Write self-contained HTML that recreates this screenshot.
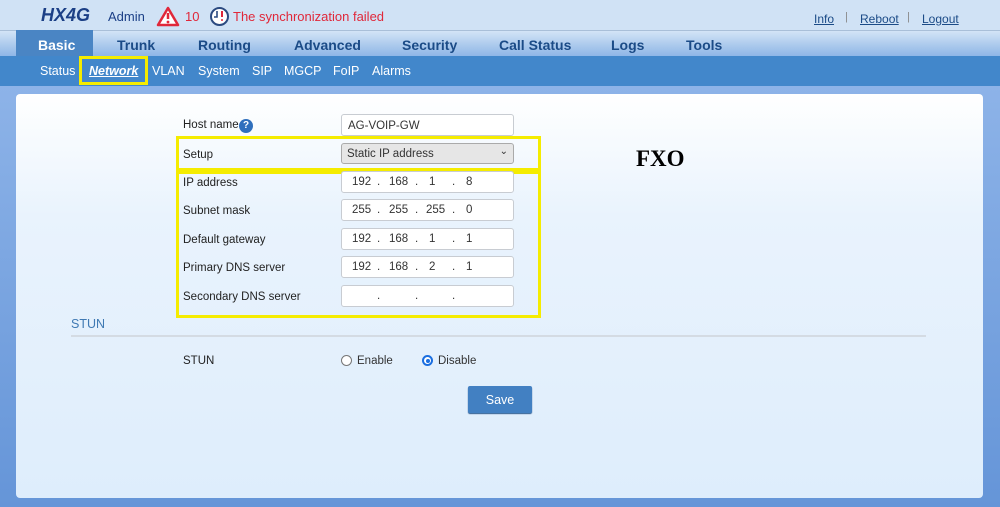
<!DOCTYPE html>
<html><head><meta charset="utf-8"><style>
*{margin:0;padding:0;box-sizing:border-box}
body{width:1000px;height:507px;overflow:hidden;font-family:"Liberation Sans","DejaVu Sans",sans-serif;background:#6e9ad9;position:relative}
.a{position:absolute}
#hdr{left:0;top:0;width:1000px;height:31px;background:#d0e2f5;border-bottom:1px solid #a9bfd8}
#tabs{left:0;top:31px;width:1000px;height:25px;background:linear-gradient(#d3e4f6,#a9c8ec 60%,#8fb6e7)}
#sub{left:0;top:56px;width:1000px;height:30px;background:#4287cb}
#bg{left:0;top:86px;width:1000px;height:421px;background:linear-gradient(#8db3e8,#6595d8)}
#panel{left:16px;top:94px;width:967px;height:404px;background:linear-gradient(#fff,#e9f3fd 30%,#deedfc);border-radius:4px}
.tab{top:37px;font-size:14px;font-weight:bold;color:#1b4b87}
.sn{top:64px;font-size:12.5px;color:#fff}
.lbl{font-size:11.5px;color:#222}
.inp{left:341px;width:173px;height:22px;background:#fff;border:1px solid #c8ccd2;border-radius:3px;font-size:11.5px;color:#333}
.ip span{position:absolute;top:4px}
.yb{border:3px solid #f5ec00}
.lk{top:12px;font-size:12px;color:#1b4b87;text-decoration:underline}
</style></head><body>
<div class="a" id="hdr"></div>
<div class="a" style="left:41px;top:5px;font-size:18px;font-weight:bold;font-style:italic;color:#1b3f86">HX4G</div>
<div class="a" style="left:108px;top:9px;font-size:13px;color:#1b3f86">Admin</div>
<svg class="a" style="left:156px;top:6px" width="24" height="21" viewBox="0 0 24 21"><path d="M12 2L22 19H2Z" fill="#fff" stroke="#e0283a" stroke-width="2.5" stroke-linejoin="round"/><path d="M12 7v6" stroke="#e0283a" stroke-width="2.5"/><circle cx="12" cy="16" r="1.4" fill="#e0283a"/></svg>
<div class="a" style="left:185px;top:9px;font-size:13px;color:#e0283a">10</div>
<svg class="a" style="left:209px;top:6px" width="21" height="21" viewBox="0 0 21 21"><circle cx="10.5" cy="10.5" r="8.5" fill="#fff" stroke="#2b4a80" stroke-width="2"/><path d="M8 5v6h-3" stroke="#2b4a80" stroke-width="1.6" fill="none"/><path d="M13 5v6" stroke="#e0283a" stroke-width="2"/><circle cx="13" cy="14" r="1" fill="#e0283a"/></svg>
<div class="a" style="left:233px;top:9px;font-size:13px;color:#e0283a">The synchronization failed</div>
<div class="a lk" style="left:814px">Info</div>
<div class="a" style="left:845px;top:11px;font-size:11px;color:#888">|</div>
<div class="a lk" style="left:860px">Reboot</div>
<div class="a" style="left:907px;top:11px;font-size:11px;color:#888">|</div>
<div class="a lk" style="left:922px">Logout</div>
<div class="a" id="tabs"></div>
<div class="a" style="left:16px;top:30px;width:77px;height:26px;background:#4a85c4"></div>
<div class="a tab" style="left:38px;color:#fff">Basic</div>
<div class="a tab" style="left:117px">Trunk</div>
<div class="a tab" style="left:198px">Routing</div>
<div class="a tab" style="left:294px">Advanced</div>
<div class="a tab" style="left:402px">Security</div>
<div class="a tab" style="left:499px">Call Status</div>
<div class="a tab" style="left:611px">Logs</div>
<div class="a tab" style="left:686px">Tools</div>
<div class="a" id="sub"></div>
<div class="a sn" style="left:40px">Status</div>
<div class="a yb" style="left:79px;top:56px;width:69px;height:29px"></div>
<div class="a sn" style="left:89px;font-weight:bold;font-style:italic;text-decoration:underline">Network</div>
<div class="a sn" style="left:152px">VLAN</div>
<div class="a sn" style="left:198px">System</div>
<div class="a sn" style="left:252px">SIP</div>
<div class="a sn" style="left:284px">MGCP</div>
<div class="a sn" style="left:333px">FoIP</div>
<div class="a sn" style="left:372px">Alarms</div>
<div class="a" id="bg"></div>
<div class="a" id="panel"></div>
<div class="a lbl" style="left:183px;top:119px">Host name</div>
<div class="a" style="left:239px;top:119px;width:14px;height:14px;border-radius:50%;background:#2f6fbd;color:#fff;font-size:10px;font-weight:bold;text-align:center;line-height:14px">?</div>
<div class="a inp" style="top:114px;padding:5px 6px">AG-VOIP-GW</div>
<div class="a yb" style="left:176px;top:136px;width:365px;height:35px"></div>
<div class="a lbl" style="left:183px;top:149px">Setup</div>
<div class="a inp" style="top:143px;height:21px;background:#e6e6e6;border-color:#aaa;padding:4px 5px">Static IP address<span style="position:absolute;right:5px;top:2px;font-size:10px">&#8964;</span></div>
<div class="a yb" style="left:176px;top:171px;width:365px;height:147px"></div>
<div class="a lbl" style="left:183px;top:177px">IP address</div>
<div class="a inp ip" style="top:171px"><span style="left:10px">192</span><span style="left:35px">.</span><span style="left:47px">168</span><span style="left:73px">.</span><span style="left:87px">1</span><span style="left:110px">.</span><span style="left:124px">8</span></div>
<div class="a lbl" style="left:183px;top:205px">Subnet mask</div>
<div class="a inp ip" style="top:199px"><span style="left:10px">255</span><span style="left:35px">.</span><span style="left:47px">255</span><span style="left:73px">.</span><span style="left:84px">255</span><span style="left:110px">.</span><span style="left:124px">0</span></div>
<div class="a lbl" style="left:183px;top:234px">Default gateway</div>
<div class="a inp ip" style="top:228px"><span style="left:10px">192</span><span style="left:35px">.</span><span style="left:47px">168</span><span style="left:73px">.</span><span style="left:87px">1</span><span style="left:110px">.</span><span style="left:124px">1</span></div>
<div class="a lbl" style="left:183px;top:262px">Primary DNS server</div>
<div class="a inp ip" style="top:256px"><span style="left:10px">192</span><span style="left:35px">.</span><span style="left:47px">168</span><span style="left:73px">.</span><span style="left:87px">2</span><span style="left:110px">.</span><span style="left:124px">1</span></div>
<div class="a lbl" style="left:183px;top:291px">Secondary DNS server</div>
<div class="a inp ip" style="top:285px"><span style="left:35px">.</span><span style="left:73px">.</span><span style="left:110px">.</span></div>
<div class="a" style="left:636px;top:146px;font-family:'Liberation Serif',serif;font-size:23px;font-weight:bold;color:#000">FXO</div>
<div class="a" style="left:71px;top:317px;font-size:12.5px;color:#3f79b3">STUN</div>
<div class="a" style="left:71px;top:335px;width:855px;height:2px;background:#d4dbe3"></div>
<div class="a lbl" style="left:183px;top:355px">STUN</div>
<div class="a" style="left:341px;top:355px;width:11px;height:11px;border:1px solid #777;border-radius:50%;background:#fff"></div>
<div class="a lbl" style="left:357px;top:355px;color:#333">Enable</div>
<div class="a" style="left:422px;top:355px;width:11px;height:11px;border:2px solid #1a6ee0;border-radius:50%;background:#fff"><div style="margin:1.5px auto;width:4px;height:4px;border-radius:50%;background:#1a6ee0"></div></div>
<div class="a lbl" style="left:438px;top:355px;color:#333">Disable</div>
<div class="a" style="left:468px;top:386px;width:64px;height:27px;background:#4280c2;border-radius:2px;color:#fff;font-size:12.5px;text-align:center;line-height:29px;box-shadow:0 1px 1px #2a5a90">Save</div>
</body></html>
